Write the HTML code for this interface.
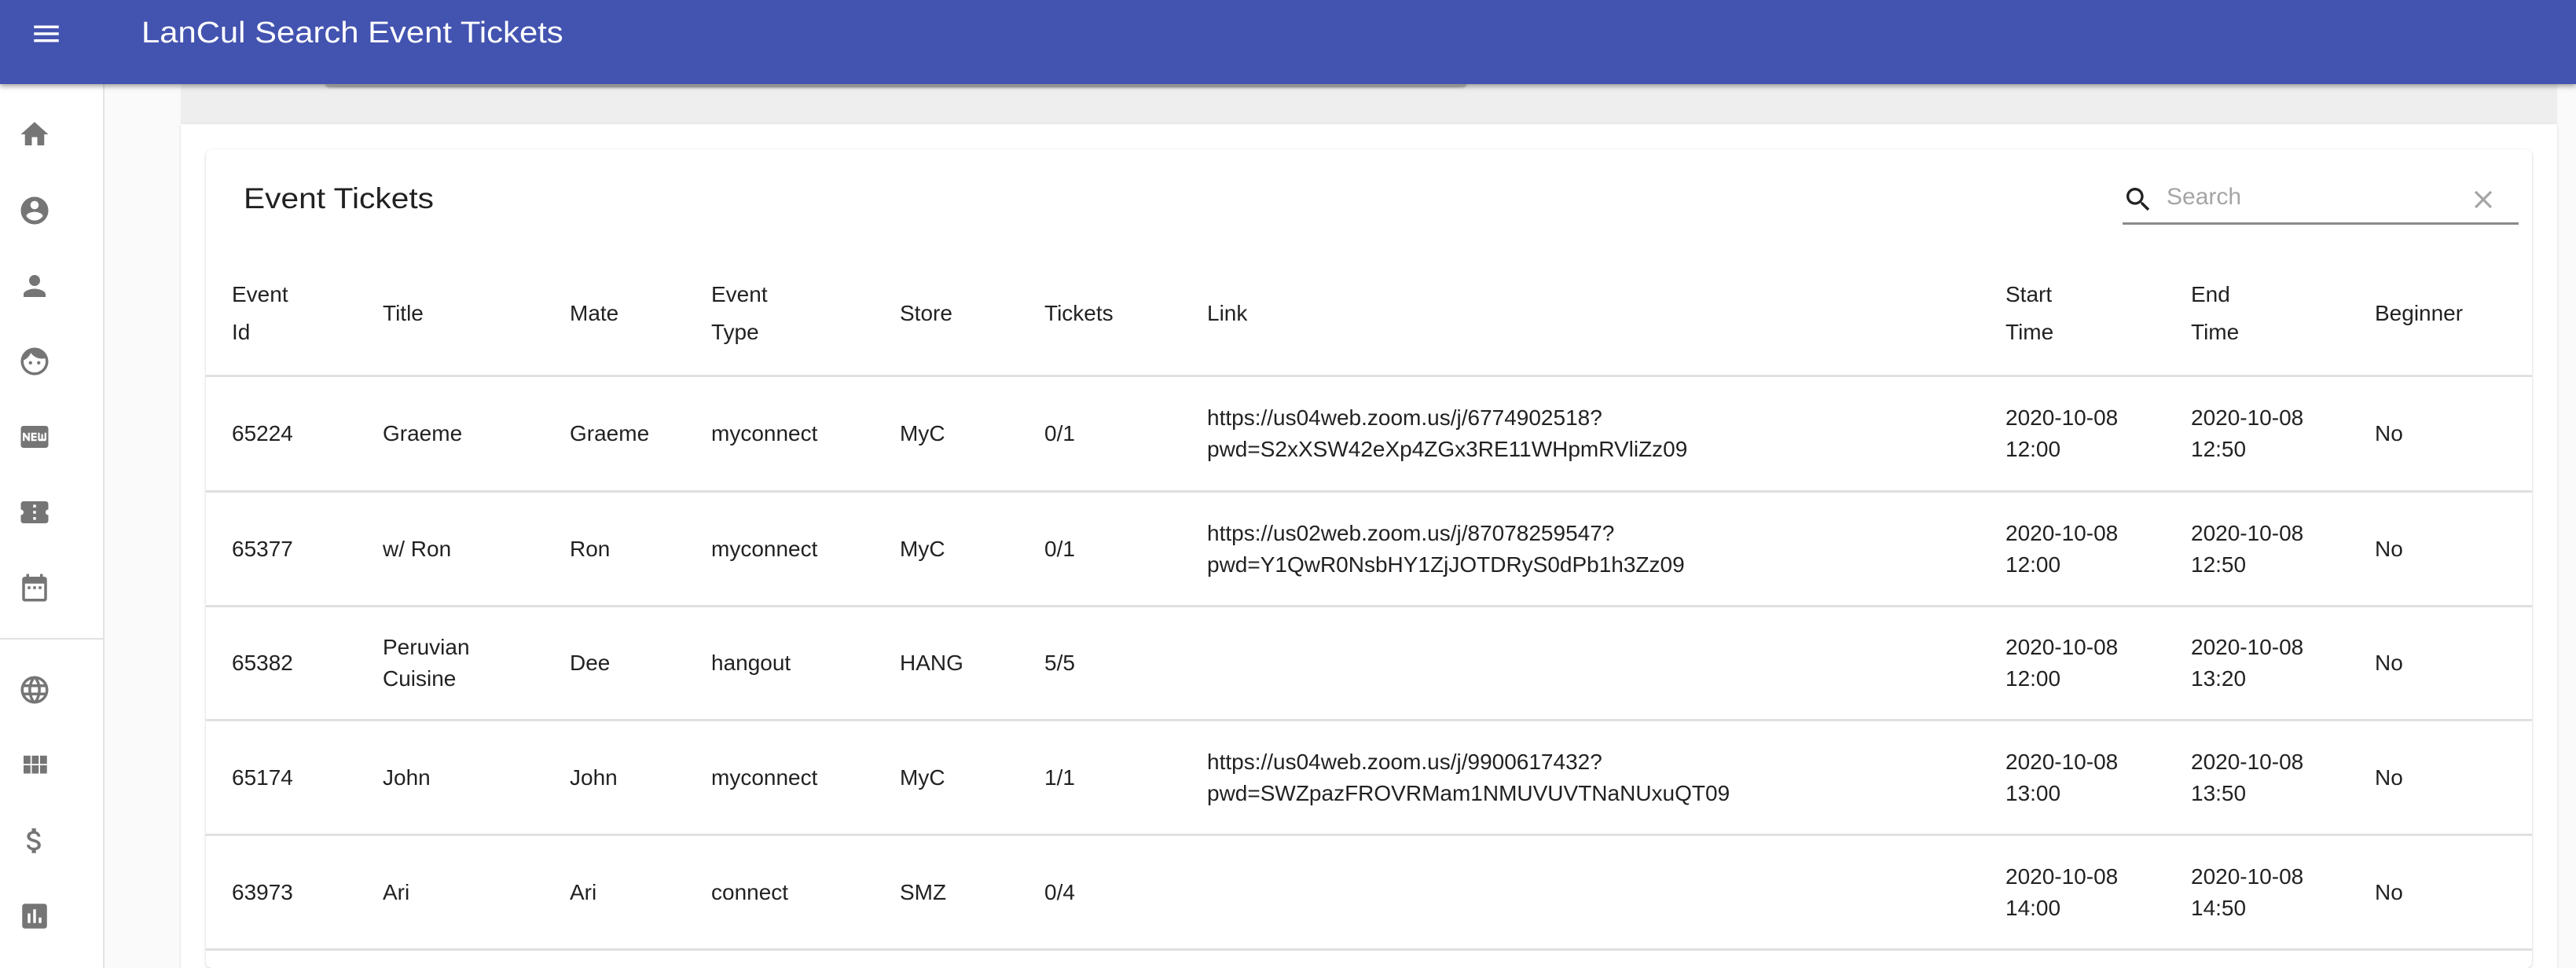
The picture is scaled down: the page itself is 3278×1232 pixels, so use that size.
<!DOCTYPE html>
<html><head><meta charset="utf-8">
<style>
*{box-sizing:border-box;margin:0;padding:0}
html,body{width:3278px;height:1232px;overflow:hidden;background:#fafafa;font-family:"Liberation Sans",Arial,sans-serif;color:rgba(0,0,0,.87)}
.top{position:absolute;left:0;top:0;width:3278px;height:107px;background:#4353b0;box-shadow:0 3px 6px rgba(0,0,0,.35);z-index:5}
.top .title{position:absolute;left:180px;top:21px;font-size:38px;color:#fff;transform:scaleX(1.1);transform-origin:0 0}
.top svg{position:absolute;left:38px;top:22px}
.side{position:absolute;left:0;top:107px;width:133px;height:1125px;background:#fff;border-right:2px solid #e4e4e4}
.side svg{position:absolute;left:23px}
.side .div{position:absolute;left:0;top:705px;width:132px;height:2px;background:#e2e2e2}
.gray{position:absolute;left:230px;top:107px;width:3024px;height:51px;background:#eee}
.ghost{position:absolute;left:414px;top:104px;width:1452px;height:5px;background:#c8c8c8;border-radius:0 0 5px 5px;box-shadow:0 2px 3px rgba(0,0,0,.35);z-index:4}
.paper{position:absolute;left:230px;top:158px;width:3024px;height:1074px;background:#fff;box-shadow:0 1px 3px rgba(0,0,0,.15)}
.card{position:absolute;left:262px;top:190px;width:2960px;height:1042px;background:#fff;border-radius:8px;box-shadow:0 2px 4px rgba(0,0,0,.12),0 0 2px rgba(0,0,0,.08)}
.h{position:absolute;left:310px;top:232px;font-size:37px;transform:scaleX(1.1);transform-origin:0 0}
.search{position:absolute;left:2701px;top:222px;width:504px;height:64px;border-bottom:3px solid #8a8a8a}
.search .ph{position:absolute;left:56px;top:12px;font-size:30px;color:#a5a5a5}
.search svg{position:absolute}
.row{position:absolute;left:262px;width:2960px;border-bottom:3px solid #e0e0e0}
.c{position:absolute;top:0;height:100%;display:flex;align-items:center;font-size:28px;line-height:40px;white-space:nowrap}
.hd .c{line-height:48px}
</style></head><body>
<div class="top">
<svg width="42" height="42" viewBox="0 0 24 24"><path fill="#fff" d="M3 18h18v-2H3v2zm0-5h18v-2H3v2zm0-7v2h18V6H3z"/></svg>
<div class="title">LanCul Search Event Tickets</div>
</div>
<div class="side">
<svg style="top:43px" width="42" height="42" viewBox="0 0 24 24"><path fill="#757575" d="M10 20v-6h4v6h5v-8h3L12 3 2 12h3v8z"/></svg>
<svg style="top:140px" width="42" height="42" viewBox="0 0 24 24"><path fill="#757575" d="M12 2C6.48 2 2 6.48 2 12s4.48 10 10 10 10-4.48 10-10S17.52 2 12 2zm0 3c1.66 0 3 1.34 3 3s-1.34 3-3 3-3-1.34-3-3 1.34-3 3-3zm0 14.2c-2.5 0-4.71-1.28-6-3.22.03-1.99 4-3.08 6-3.08 1.99 0 5.970 1.09 6 3.08-1.29 1.94-3.5 3.22-6 3.22z"/></svg>
<svg style="top:236px" width="42" height="42" viewBox="0 0 24 24"><path fill="#757575" d="M12 12c2.21 0 4-1.79 4-4s-1.79-4-4-4-4 1.79-4 4 1.79 4 4 4zm0 2c-2.67 0-8 1.34-8 4v2h16v-2c0-2.66-5.33-4-8-4z"/></svg>
<svg style="top:332px" width="42" height="42" viewBox="0 0 24 24"><path fill="#757575" d="M9 11.75c-.69 0-1.25.56-1.25 1.25s.56 1.25 1.25 1.25 1.25-.56 1.25-1.25-.56-1.25-1.25-1.25zm6 0c-.69 0-1.25.56-1.25 1.25s.56 1.25 1.25 1.25 1.25-.56 1.25-1.25-.56-1.25-1.25-1.25zM12 2C6.48 2 2 6.48 2 12s4.48 10 10 10 10-4.48 10-10S17.52 2 12 2zm0 18c-4.41 0-8-3.59-8-8 0-.29.02-.58.05-.86 2.36-1.05 4.23-2.98 5.21-5.37C11.07 8.33 14.05 10 17.42 10c.78 0 1.53-.09 2.25-.26.21.71.33 1.47.33 2.26 0 4.41-3.59 8-8 8z"/></svg>
<svg style="top:428px" width="42" height="42" viewBox="0 0 24 24"><path fill="#757575" d="M20 4H4c-1.11 0-1.99.89-1.99 2L2 18c0 1.11.89 2 2 2h16c1.11 0 2-.89 2-2V6c0-1.11-.89-2-2-2zM8.5 15H7.3l-2.55-3.5V15H3.5V9h1.25l2.5 3.5V9H8.5v6zm5-4.74H11v1.12h2.5v1.26H11v1.11h2.5V15h-4V9h4v1.26zm7 3.74c0 .55-.45 1-1 1h-4c-.55 0-1-.45-1-1V9h1.25v4.51h1.13V9.99h1.25v3.51h1.12V9h1.25v5z"/></svg>
<svg style="top:524px" width="42" height="42" viewBox="0 0 24 24"><path fill="#757575" d="M22 10V6c0-1.11-.9-2-2-2H4c-1.1 0-1.99.89-1.99 2v4c1.1 0 1.99.9 1.99 2s-.89 2-2 2v4c0 1.1.9 2 2 2h16c1.1 0 2-.9 2-2v-4c-1.1 0-2-.9-2-2s.9-2 2-2zm-9 7.5h-2v-2h2v2zm0-4.5h-2v-2h2v2zm0-4.5h-2v-2h2v2z"/></svg>
<svg style="top:620px" width="42" height="42" viewBox="0 0 24 24"><path fill="#757575" d="M9 11H7v2h2v-2zm4 0h-2v2h2v-2zm4 0h-2v2h2v-2zm2-7h-1V2h-2v2H8V2H6v2H5c-1.11 0-1.99.9-1.99 2L3 20c0 1.1.89 2 2 2h14c1.1 0 2-.9 2-2V6c0-1.1-.9-2-2-2zm0 16H5V9h14v11z"/></svg>
<div class="div"></div>
<svg style="top:750px" width="42" height="42" viewBox="0 0 24 24"><path fill="#757575" d="M11.99 2C6.47 2 2 6.48 2 12s4.47 10 9.99 10C17.52 22 22 17.52 22 12S17.52 2 11.99 2zm6.93 6h-2.95c-.32-1.25-.78-2.45-1.38-3.56 1.84.63 3.37 1.91 4.33 3.56zM12 4.04c.83 1.2 1.48 2.53 1.91 3.96h-3.82c.43-1.43 1.08-2.76 1.91-3.96zM4.26 14C4.1 13.36 4 12.69 4 12s.1-1.36.26-2h3.38c-.08.66-.14 1.32-.14 2 0 .68.06 1.34.14 2H4.26zm.82 2h2.95c.32 1.25.78 2.45 1.38 3.56-1.84-.63-3.37-1.9-4.33-3.56zm2.95-8H5.08c.96-1.66 2.49-2.93 4.33-3.56C8.81 5.55 8.35 6.75 8.03 8zM12 19.96c-.83-1.2-1.48-2.53-1.91-3.96h3.82c-.43 1.43-1.08 2.76-1.91 3.96zM14.34 14H9.66c-.09-.66-.16-1.32-.16-2 0-.68.07-1.35.16-2h4.68c.09.65.16 1.32.16 2 0 .68-.07 1.34-.16 2zm.25 5.56c.6-1.11 1.06-2.31 1.38-3.56h2.95c-.96 1.65-2.49 2.93-4.33 3.56zM16.36 14c.08-.66.14-1.32.14-2 0-.68-.06-1.34-.14-2h3.38c.16.64.26 1.31.26 2s-.1 1.36-.26 2h-3.38z"/></svg>
<svg style="top:846px" width="42" height="42" viewBox="0 0 24 24"><path fill="#757575" d="M4 11h5V5H4v6zm0 7h5v-6H4v6zm6 0h5v-6h-5v6zm6 0h5v-6h-5v6zm-6-7h5V5h-5v6zm6-6v6h5V5h-5z"/></svg>
<svg style="top:942px" width="42" height="42" viewBox="0 0 24 24"><path fill="#757575" d="M11.8 10.9c-2.27-.59-3-1.2-3-2.15 0-1.09 1.01-1.85 2.7-1.85 1.78 0 2.44.85 2.5 2.1h2.21c-.07-1.72-1.12-3.3-3.21-3.81V3h-3v2.16c-1.94.42-3.5 1.68-3.5 3.61 0 2.31 1.91 3.46 4.7 4.13 2.5.6 3 1.48 3 2.41 0 .69-.49 1.79-2.7 1.79-2.06 0-2.87-.92-2.98-2.1h-2.2c.12 2.19 1.76 3.42 3.68 3.83V21h3v-2.15c1.95-.37 3.5-1.5 3.5-3.55 0-2.84-2.43-3.81-4.7-4.4z"/></svg>
<svg style="top:1038px" width="42" height="42" viewBox="0 0 24 24"><path fill="#757575" d="M19 3H5c-1.1 0-2 .9-2 2v14c0 1.1.9 2 2 2h14c1.1 0 2-.9 2-2V5c0-1.1-.9-2-2-2zM9 17H7v-7h2v7zm4 0h-2V7h2v10zm4 0h-2v-4h2v4z"/></svg>
</div>
<div class="gray"></div>
<div class="ghost"></div>
<div class="paper"></div>
<div class="card"></div>
<div class="h">Event Tickets</div>
<div class="search">
<svg style="left:0;top:12px" width="40" height="40" viewBox="0 0 24 24"><path fill="#222" d="M15.5 14h-.79l-.28-.27C15.41 12.59 16 11.11 16 9.5 16 5.91 13.09 3 9.5 3S3 5.91 3 9.5 5.91 16 9.5 16c1.61 0 3.09-.59 4.23-1.57l.27.28v.79l5 4.99L20.49 19l-4.990-5zm-6 0C7.01 14 5 11.99 5 9.5S7.01 5 9.5 5 14 7.01 14 9.5 11.99 14 9.5 14z"/></svg>
<div class="ph">Search</div>
<svg style="left:440px;top:13px" width="38" height="38" viewBox="0 0 24 24"><path fill="#a5a5a5" d="M19 6.41L17.59 5 12 10.59 6.41 5 5 6.41 10.59 12 5 17.59 6.41 19 12 13.41 17.59 19 19 17.59 13.41 12z"/></svg>
</div>

<div class="row hd" style="top:320px;height:160px">
<div class="c" style="left:33px">Event<br>Id</div>
<div class="c" style="left:225px">Title</div>
<div class="c" style="left:463px">Mate</div>
<div class="c" style="left:643px">Event<br>Type</div>
<div class="c" style="left:883px">Store</div>
<div class="c" style="left:1067px">Tickets</div>
<div class="c" style="left:1274px">Link</div>
<div class="c" style="left:2290px">Start<br>Time</div>
<div class="c" style="left:2526px">End<br>Time</div>
<div class="c" style="left:2760px">Beginner</div>
</div>

<div class="row" style="top:480px;height:147px">
<div class="c" style="left:33px">65224</div><div class="c" style="left:225px">Graeme</div><div class="c" style="left:463px">Graeme</div><div class="c" style="left:643px">myconnect</div><div class="c" style="left:883px">MyC</div><div class="c" style="left:1067px">0/1</div>
<div class="c" style="left:1274px">https://us04web.zoom.us/j/6774902518?<br>pwd=S2xXSW42eXp4ZGx3RE11WHpmRVliZz09</div>
<div class="c" style="left:2290px">2020-10-08<br>12:00</div><div class="c" style="left:2526px">2020-10-08<br>12:50</div><div class="c" style="left:2760px">No</div>
</div>
<div class="row" style="top:627px;height:146px">
<div class="c" style="left:33px">65377</div><div class="c" style="left:225px">w/ Ron</div><div class="c" style="left:463px">Ron</div><div class="c" style="left:643px">myconnect</div><div class="c" style="left:883px">MyC</div><div class="c" style="left:1067px">0/1</div>
<div class="c" style="left:1274px">https://us02web.zoom.us/j/87078259547?<br>pwd=Y1QwR0NsbHY1ZjJOTDRyS0dPb1h3Zz09</div>
<div class="c" style="left:2290px">2020-10-08<br>12:00</div><div class="c" style="left:2526px">2020-10-08<br>12:50</div><div class="c" style="left:2760px">No</div>
</div>
<div class="row" style="top:773px;height:145px">
<div class="c" style="left:33px">65382</div><div class="c" style="left:225px">Peruvian<br>Cuisine</div><div class="c" style="left:463px">Dee</div><div class="c" style="left:643px">hangout</div><div class="c" style="left:883px">HANG</div><div class="c" style="left:1067px">5/5</div>
<div class="c" style="left:2290px">2020-10-08<br>12:00</div><div class="c" style="left:2526px">2020-10-08<br>13:20</div><div class="c" style="left:2760px">No</div>
</div>
<div class="row" style="top:918px;height:146px">
<div class="c" style="left:33px">65174</div><div class="c" style="left:225px">John</div><div class="c" style="left:463px">John</div><div class="c" style="left:643px">myconnect</div><div class="c" style="left:883px">MyC</div><div class="c" style="left:1067px">1/1</div>
<div class="c" style="left:1274px">https://us04web.zoom.us/j/9900617432?<br>pwd=SWZpazFROVRMam1NMUVUVTNaNUxuQT09</div>
<div class="c" style="left:2290px">2020-10-08<br>13:00</div><div class="c" style="left:2526px">2020-10-08<br>13:50</div><div class="c" style="left:2760px">No</div>
</div>
<div class="row" style="top:1064px;height:146px">
<div class="c" style="left:33px">63973</div><div class="c" style="left:225px">Ari</div><div class="c" style="left:463px">Ari</div><div class="c" style="left:643px">connect</div><div class="c" style="left:883px">SMZ</div><div class="c" style="left:1067px">0/4</div>
<div class="c" style="left:2290px">2020-10-08<br>14:00</div><div class="c" style="left:2526px">2020-10-08<br>14:50</div><div class="c" style="left:2760px">No</div>
</div>
</body></html>
